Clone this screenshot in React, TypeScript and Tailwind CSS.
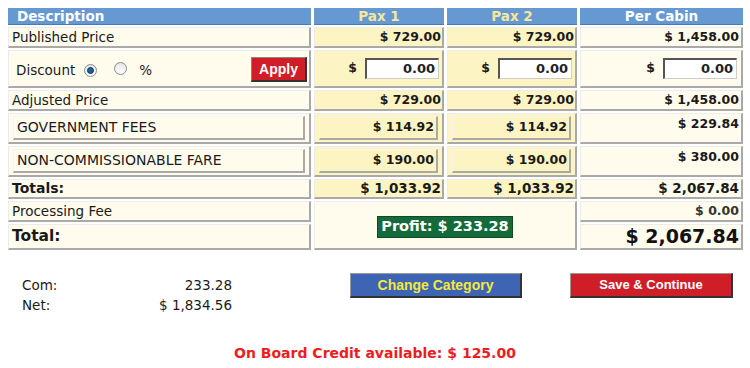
import React from "react";

const cell =
  "border-t border-l border-t-[#ececec] border-l-[#ececec] border-r-2 border-b-2 border-r-[#a9a9a9] border-b-[#a9a9a9] flex items-center";
const cream = "bg-[#fffcee]";
const yellow = "bg-[#fdf4c3]";
const inner =
  "border-t border-l border-t-[#f4f4f4] border-l-[#f4f4f4] border-r-2 border-b-2 border-r-[#a9a9a9] border-b-[#a9a9a9]";
const arial = { fontFamily: '"Liberation Sans", Arial, sans-serif' };

function Input() {
  return (
    <div className="w-[74px] h-[21px] bg-white border-t-2 border-l-2 border-t-[#555] border-l-[#555] border-r border-b border-r-[#ccc] border-b-[#ccc] flex items-center justify-end pr-[3px] text-[13px] font-bold text-[#222]">
      0.00
    </div>
  );
}

function Radio({ checked }: { checked?: boolean }) {
  return (
    <span className="inline-flex w-[13px] h-[13px] rounded-full border border-[#8a8a8a] bg-gradient-to-b from-[#e6e6e6] to-white items-center justify-center">
      {checked && <span className="w-[7px] h-[7px] rounded-full bg-[#1f5e96] border border-[#0d3b66]" />}
    </span>
  );
}

export default function App() {
  return (
    <div
      className="w-[750px] h-[368px] bg-white relative text-[#1a1a1a]"
      style={{ fontFamily: '"DejaVu Sans", Verdana, sans-serif' }}
    >
      <div className="pt-[8px] pl-[8px]">
        <div
          className="grid gap-x-[3px] gap-y-[2px]"
          style={{
            gridTemplateColumns: "303px 130px 130px 163px",
            gridTemplateRows: "17px 21px 38px 21px 31px 31px 20px 21px 26px",
          }}
        >
          {/* header */}
          <div className="bg-[#6699d1] text-white font-bold text-[13.5px] pl-[9px] flex items-center border-b border-[#4a7ab2]">Description</div>
          <div className="bg-[#6699d1] text-[#f6e79a] font-bold text-[13.5px] flex items-center justify-center border-b border-[#4a7ab2]">Pax 1</div>
          <div className="bg-[#6699d1] text-[#f6e79a] font-bold text-[13.5px] flex items-center justify-center border-b border-[#4a7ab2]">Pax 2</div>
          <div className="bg-[#6699d1] text-white font-bold text-[13.5px] flex items-center justify-center border-b border-[#4a7ab2]">Per Cabin</div>

          {/* published */}
          <div className={`${cell} ${cream} pl-[3px] text-[13.5px]`}>Published Price</div>
          <div className={`${cell} ${yellow} justify-end pr-[1px] text-[12.5px] font-bold`}>$ 729.00</div>
          <div className={`${cell} ${yellow} justify-end pr-[1px] text-[12.5px] font-bold`}>$ 729.00</div>
          <div className={`${cell} ${cream} justify-end pr-[2px] text-[12.5px] font-bold`}>$ 1,458.00</div>

          {/* discount */}
          <div className={`${cell} ${cream} pl-[7px] text-[13.5px] justify-between pr-[2px]`}>
            <div className="flex items-center gap-[9px] pt-[3px]">
              <span>Discount</span>
              <Radio checked />
              <span className="ml-[8px]"><Radio /></span>
              <span className="ml-[3px]">%</span>
            </div>
            <div
              className="w-[56px] h-[25px] bg-[#cf1e27] border-t border-l border-[#888] border-r-2 border-b-2 border-r-[#333] border-b-[#333] text-white font-bold text-[14px] flex items-center justify-center mt-[2px]"
              style={arial}
            >
              Apply
            </div>
          </div>
          <div className={`${cell} ${yellow} justify-end pr-[3px] gap-[8px] text-[12.5px] font-bold`}>
            <span>$</span>
            <Input />
          </div>
          <div className={`${cell} ${yellow} justify-end pr-[3px] gap-[8px] text-[12.5px] font-bold`}>
            <span>$</span>
            <Input />
          </div>
          <div className={`${cell} ${cream} justify-end pr-[4px] gap-[8px] text-[12.5px] font-bold`}>
            <span>$</span>
            <Input />
          </div>

          {/* adjusted */}
          <div className={`${cell} ${cream} pl-[3px] text-[13.5px]`}>Adjusted Price</div>
          <div className={`${cell} ${yellow} justify-end pr-[1px] text-[12.5px] font-bold`}>$ 729.00</div>
          <div className={`${cell} ${yellow} justify-end pr-[1px] text-[12.5px] font-bold`}>$ 729.00</div>
          <div className={`${cell} ${cream} justify-end pr-[2px] text-[12.5px] font-bold`}>$ 1,458.00</div>

          {/* gov fees */}
          <div className={`${cell} ${cream} px-[4px]`}>
            <div className={`${inner} w-full h-[24px] flex items-center pl-[3px] text-[14px] bg-[#fffcee]`}>GOVERNMENT FEES</div>
          </div>
          <div className={`${cell} ${yellow} px-[4px]`}>
            <div className={`${inner} w-full h-[24px] flex items-center justify-end pr-[2px] text-[12.5px] font-bold bg-[#fdf4c3]`}>$ 114.92</div>
          </div>
          <div className={`${cell} ${yellow} px-[4px]`}>
            <div className={`${inner} w-full h-[24px] flex items-center justify-end pr-[2px] text-[12.5px] font-bold bg-[#fdf4c3]`}>$ 114.92</div>
          </div>
          <div className={`${cell} ${cream} !items-start justify-end pr-[2px] pt-[1px] text-[12.5px] font-bold`}>$ 229.84</div>

          {/* NCF */}
          <div className={`${cell} ${cream} px-[4px]`}>
            <div className={`${inner} w-full h-[24px] flex items-center pl-[3px] text-[14px] bg-[#fffcee]`}>NON-COMMISSIONABLE FARE</div>
          </div>
          <div className={`${cell} ${yellow} px-[4px]`}>
            <div className={`${inner} w-full h-[24px] flex items-center justify-end pr-[2px] text-[12.5px] font-bold bg-[#fdf4c3]`}>$ 190.00</div>
          </div>
          <div className={`${cell} ${yellow} px-[4px]`}>
            <div className={`${inner} w-full h-[24px] flex items-center justify-end pr-[2px] text-[12.5px] font-bold bg-[#fdf4c3]`}>$ 190.00</div>
          </div>
          <div className={`${cell} ${cream} !items-start justify-end pr-[2px] pt-[1px] text-[12.5px] font-bold`}>$ 380.00</div>

          {/* totals */}
          <div className={`${cell} ${cream} pl-[3px] text-[14px] font-bold`}>Totals:</div>
          <div className={`${cell} ${yellow} justify-end pr-[1px] text-[13.5px] font-bold`}>$ 1,033.92</div>
          <div className={`${cell} ${yellow} justify-end pr-[1px] text-[13.5px] font-bold`}>$ 1,033.92</div>
          <div className={`${cell} ${cream} justify-end pr-[2px] text-[13.5px] font-bold`}>$ 2,067.84</div>

          {/* processing */}
          <div className={`${cell} ${cream} pl-[3px] text-[13.5px]`}>Processing Fee</div>
          <div
            className={`${cell} ${cream} justify-center !items-start pt-[14px]`}
            style={{ gridColumn: "2 / 4", gridRow: "8 / 10" }}
          >
            <div className="bg-[#156a3a] text-white font-bold text-[14.5px] px-[3px] h-[22px] flex items-center border border-[#0d4a27]">
              Profit: $ 233.28
            </div>
          </div>
          <div className={`${cell} ${cream} justify-end pr-[2px] text-[12.5px] font-bold text-[#333]`}>$ 0.00</div>

          {/* total */}
          <div className={`${cell} ${cream} pl-[3px] text-[15.5px] font-bold`}>Total:</div>
          <div className={`${cell} ${cream} justify-end pr-[2px] text-[19px] font-bold text-[#111]`}>$ 2,067.84</div>
        </div>
      </div>

      {/* bottom */}
      <div className="flex items-start mt-[23px]">
        <div className="ml-[22px] w-[210px] text-[13.5px] leading-[20px] pt-[2px]">
          <div className="flex justify-between"><span>Com:</span><span>233.28</span></div>
          <div className="flex justify-between"><span>Net:</span><span>$ 1,834.56</span></div>
        </div>
        <div
          className="ml-[118px] w-[172px] h-[25px] bg-[#3e64b4] border-t border-l border-[#999] border-r-2 border-b-2 border-r-[#333] border-b-[#333] text-[#f3e83e] font-bold text-[14px] flex items-center justify-center"
          style={arial}
        >
          Change Category
        </div>
        <div
          className="ml-[48px] w-[163px] h-[25px] bg-[#cf1e27] border-t border-l border-[#999] border-r-2 border-b-2 border-r-[#333] border-b-[#333] text-white font-bold text-[13px] flex items-center justify-center"
          style={arial}
        >
          Save &amp; Continue
        </div>
      </div>
      <div className="absolute left-0 right-0 top-[343px] text-center text-[#f01c1c] font-bold text-[14px]">
        On Board Credit available: $ 125.00
      </div>
    </div>
  );
}
